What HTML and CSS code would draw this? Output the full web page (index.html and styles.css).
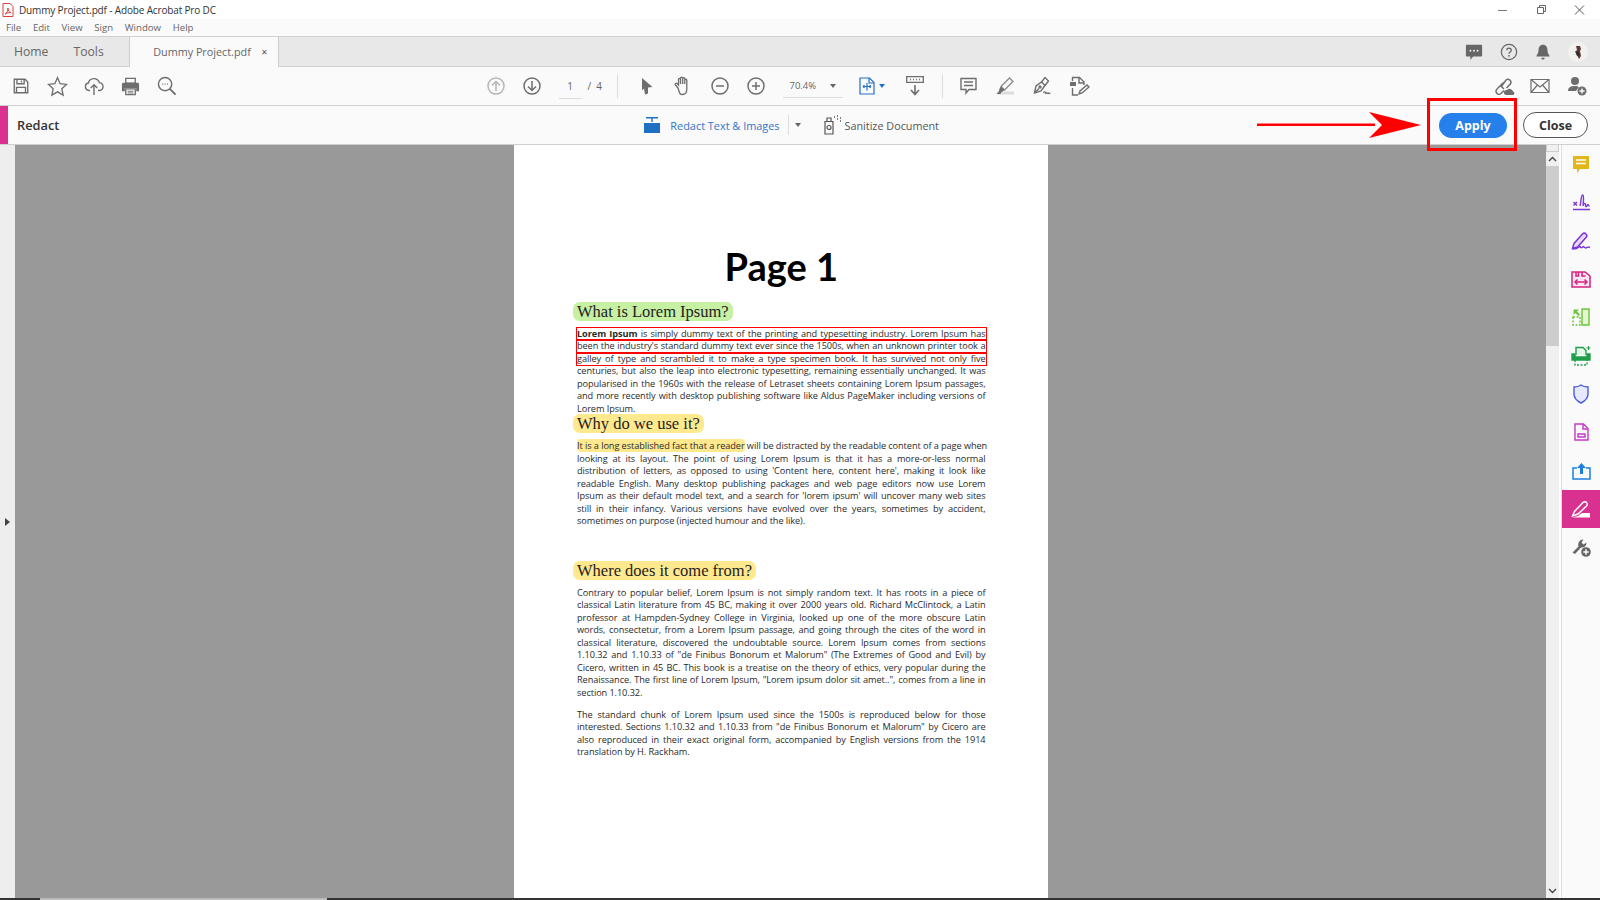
FILE: index.html
```html
<!DOCTYPE html>
<html lang="en">
<head>
    <meta charset="UTF-8">
    <title>Dummy Project.pdf - Adobe Acrobat Pro DC</title>
    <link rel="stylesheet" href="styles.css">
</head>
<body>
<div class="app">

    <div class="titlebar">
        <svg class="pdf-icon" width="12" height="14" viewBox="0 0 12 14"><path d="M1 .5h7l3 3v10H1z" fill="#fff" stroke="#d8413a"/><path d="M3 11c2-1 3-3 3-6 0 3 1 4 3 4.500-2 0-4 .5-6 1.500z" fill="none" stroke="#d8413a"/></svg>
        <span class="title-text">Dummy Project.pdf - Adobe Acrobat Pro DC</span>
        <div class="win-controls">
            <svg width="38" height="16" viewBox="0 0 38 16"><path d="M14 8.500h9" stroke="#777"/></svg>
            <svg width="38" height="16" viewBox="0 0 38 16"><path d="M15.500 5.500h6v6h-6zM17.500 5.500v-2h6v6h-2" fill="none" stroke="#666"/></svg>
            <svg width="38" height="16" viewBox="0 0 38 16"><path d="M15 3.500l9 9M24 3.500l-9 9" stroke="#555"/></svg>
        </div>
    </div>

    <div class="menubar">
        <span>File</span><span>Edit</span><span>View</span><span>Sign</span><span>Window</span><span>Help</span>
    </div>

    <div class="tabbar">
        <span class="nav-tab nav-home">Home</span>
        <span class="nav-tab nav-tools">Tools</span>
        <div class="doc-tab">
            <span>Dummy Project.pdf</span>
            <span class="tab-close">&#10005;</span>
        </div>
        <div class="tab-right">
            <div class="btn"><svg width="18" height="18" viewBox="0 0 20 20"><path d="M2 2h16a1 1 0 0 1 1 1v11a1 1 0 0 1-1 1h-9l-3 4v-4H2a1 1 0 0 1-1-1V3a1 1 0 0 1 1-1z" fill="#666"/><circle cx="6" cy="8.500" r="1" fill="#fff"/><circle cx="10" cy="8.500" r="1" fill="#fff"/><circle cx="14" cy="8.500" r="1" fill="#fff"/></svg></div>
            <div class="btn"><svg width="18" height="18" viewBox="0 0 20 20"><circle cx="10" cy="10" r="8.500" fill="none" stroke="#666" stroke-width="1.400"/><path d="M7.500 8c0-3.200 5-3.200 5 0 0 2-2.500 2-2.500 4" fill="none" stroke="#666" stroke-width="1.400"/><circle cx="10" cy="14.300" r="1" fill="#666"/></svg></div>
            <div class="btn"><svg width="18" height="18" viewBox="0 0 20 20"><path d="M10 2c-3.500 0-5 3-5 6 0 4-2 5-2.500 7h15c-.5-2-2.500-3-2.500-7 0-3-1.500-6-5-6z" fill="#666"/><path d="M8 16.500h4a2 2 0 0 1-4 0z" fill="#666"/></svg></div>
            <div class="btn"><svg width="20" height="20" viewBox="0 0 20 20"><circle cx="10" cy="10" r="10" fill="#f3f1f0"/><path d="M8 4h4l1 3-1 2 1 5-2 3-2-4-1-4 1-1z" fill="#5a3a35"/><path d="M7 9l3 1 2 3-3 1z" fill="#2b2b2b"/></svg></div>
        </div>
    </div>

    <div class="toolbar">
        <div class="tools tools-left">
            <div class="btn"><svg width="18" height="18" viewBox="0 0 20 20" fill="none" stroke="#6e6e6e" stroke-width="1.500"><path d="M2.500 2.500h12l3 3v12h-15z"/><path d="M5.500 2.500v5h8v-5M5 17.500v-6h10v6"/><path d="M10.500 4v2"/></svg></div>
            <div class="btn"><svg width="21" height="21" viewBox="0 0 22 22" fill="none" stroke="#6e6e6e" stroke-width="1.400"><path d="M11 1.800l2.800 6.300 6.700.7-5 4.500 1.400 6.700-5.900-3.400L5.100 20l1.400-6.700-5-4.500 6.700-.7z"/></svg></div>
            <div class="btn"><svg width="20" height="20" viewBox="0 0 20 20" fill="none" stroke="#6e6e6e" stroke-width="1.400"><path d="M6 14.500H5a3.800 3.800 0 0 1-.6-7.500 5.700 5.700 0 0 1 11-.4 4 4 0 0 1 .4 7.900H14"/><path d="M10 19V9M6.700 12L10 8.700l3.300 3.300"/></svg></div>
            <div class="btn"><svg width="19" height="19" viewBox="0 0 20 20"><path d="M5 1.500h10v5H5z" fill="none" stroke="#6e6e6e" stroke-width="1.400"/><path d="M2.500 6h15A1.500 1.500 0 0 1 19 7.500V15h-3v-3.500H4V15H1V7.500A1.500 1.500 0 0 1 2.500 6z" fill="#6e6e6e"/><path d="M5 12.500h10v6H5z" fill="none" stroke="#6e6e6e" stroke-width="1.400"/><path d="M7 15h6M7 16.800h6" stroke="#6e6e6e"/></svg></div>
            <div class="btn"><svg width="20" height="20" viewBox="0 0 21 21" fill="none" stroke="#6e6e6e" stroke-width="1.500"><circle cx="8.500" cy="8.500" r="7"/><path d="M13.500 13.500l6 6" stroke-width="2"/><path d="M5.500 8.500h1M8 8.500h1M10.500 8.500h1"/></svg></div>
        </div>

        <div class="tools tools-mid">
            <div class="btn"><svg width="18" height="18" viewBox="0 0 18 18" fill="none" stroke="#b5b5b5" stroke-width="1.500"><circle cx="9" cy="9" r="8"/><path d="M9 14V4.500M5 8.500l4-4 4 4"/></svg></div>
            <div class="btn"><svg width="18" height="18" viewBox="0 0 18 18" fill="none" stroke="#6e6e6e" stroke-width="1.500"><circle cx="9" cy="9" r="8"/><path d="M9 4v9.500M5 9.500l4 4 4-4"/></svg></div>
            <div class="page-field">1</div>
            <span class="page-total">/&nbsp;&nbsp;4</span>
            <div class="sep sep-a"></div>
            <div class="btn"><svg width="14" height="18" viewBox="0 0 14 18"><path d="M2 1l10.500 9-4.500.5 0 6-3 1-1-6-2 2z" fill="#6e6e6e"/></svg></div>
            <div class="btn"><svg width="20" height="20" viewBox="0 0 20 20" fill="none" stroke="#6e6e6e" stroke-width="1.300"><path d="M5 12L2.500 9c-1-1.300.5-2.500 1.600-1.500L5.500 9V3.500c0-1.500 2-1.500 2 0V8 2.200c0-1.500 2.200-1.500 2.200 0V8 2.800c0-1.500 2.100-1.500 2.100 0V8 4.300c0-1.500 2-1.500 2 0V13c0 3.500-2 5.500-4.500 5.500S6.500 17 5 12z"/></svg></div>
            <div class="btn"><svg width="18" height="18" viewBox="0 0 18 18" fill="none" stroke="#6e6e6e" stroke-width="1.500"><circle cx="9" cy="9" r="8"/><path d="M5 9h8"/></svg></div>
            <div class="btn"><svg width="18" height="18" viewBox="0 0 18 18" fill="none" stroke="#6e6e6e" stroke-width="1.500"><circle cx="9" cy="9" r="8"/><path d="M5 9h8M9 5v8"/></svg></div>
            <div class="zoom-field"><span>70.4%</span><i class="caret"></i></div>
            <div class="btn fit-btn"><svg width="16" height="18" viewBox="0 0 16 18" fill="none" stroke="#1f6fd0" stroke-width="1.200"><path d="M1 1h9.500L15 5.500V17H1z"/><path d="M10 1v5h5" /><path d="M4 9.500h8M8 6v7.500M4 9.500l1.500-1.300M4 9.500l1.500 1.300M12 9.500l-1.500-1.300M12 9.500l-1.500 1.300"/></svg><i class="caret caret-blue"></i></div>
            <div class="btn"><svg width="18" height="20" viewBox="0 0 18 20" fill="none" stroke="#6e6e6e" stroke-width="1.300"><path d="M.7.700h16.600v5.600H.7z"/><path d="M4 3.500h1M7 3.500h1M10 3.500h1M13 3.500h1"/><path d="M9 9v9M5 14l4 4.500 4-4.500" stroke-width="1.600"/></svg></div>
            <div class="sep sep-b"></div>
            <div class="btn"><svg width="17" height="18" viewBox="0 0 17 18" fill="none" stroke="#6e6e6e" stroke-width="1.400"><path d="M1 1.500h15v11H9L6 16v-3.500H1z"/><path d="M4 5h9M4 8.500h9"/></svg></div>
            <div class="btn"><svg width="20" height="20" viewBox="0 0 20 20"><path d="M3 18.500h16v-3H8z" fill="#dcdcdc"/><path d="M6 10.500L14.500 2l3.500 3.500-8.500 8.500z" fill="#fafafa" stroke="#8a8a8a" stroke-width="1.300"/><path d="M6 10.500l3.500 3.500-2 1.500-1 .5-1 2H1.500l2.500-3 .5-2.500z" fill="#6e6e6e"/></svg></div>
            <div class="btn nib-btn"><svg width="20" height="20" viewBox="0 0 20 20" fill="none" stroke="#6e6e6e" stroke-width="1.400"><path d="M1.500 17l1.500-7 5.500-4 3.500 3.500-4 5.500z"/><path d="M1.500 17l4.500-4.500"/><circle cx="7" cy="11" r="1"/><path d="M8.500 6L12 1.500 15.500 5 12 9.500"/><path d="M10.500 17c1-2 1.500-2 2 0s1-1 1.500 0 1-1 1.500 0 1 .5 2 0" stroke-width="1.200"/></svg></div>
            <div class="btn"><svg width="21" height="21" viewBox="0 0 21 21" fill="none" stroke="#6e6e6e" stroke-width="1.400"><path d="M3.500 5V1.500h7l4.500 4.500v3"/><path d="M10 1.500V7h5"/><path d="M3.500 12v7H9"/><path d="M1 6h6v4H1z" fill="#6e6e6e" stroke="none"/><path d="M10 18l1-3 7-6 2 2-7 6z"/></svg></div>
        </div>

        <div class="tools tools-right">
            <div class="btn"><svg width="22" height="20" viewBox="0 0 22 20" fill="none" stroke="#6e6e6e" stroke-width="1.500"><path d="M8 11l5-7a3 3 0 0 1 4.500 3.800L13.500 12"/><path d="M10.500 6.500L4 13a3 3 0 0 0 4 4.500l3-3"/><path d="M8 10l3 3" /><path d="M13 19a2.500 2.500 0 0 1 1-5 3.500 3.500 0 0 1 6 1.500 1.800 1.800 0 0 1 0 3.500z" fill="#6e6e6e" stroke="none"/></svg></div>
            <div class="btn"><svg width="20" height="16" viewBox="0 0 20 16" fill="none" stroke="#6e6e6e" stroke-width="1.200"><path d="M1 1.500h18v13H1z"/><path d="M1 1.500l9 7.500 9-7.500M1 14.500L7.500 7M19 14.500L12.500 7"/></svg></div>
            <div class="btn"><svg width="20" height="20" viewBox="0 0 20 20"><circle cx="8" cy="5" r="4" fill="#6e6e6e"/><path d="M1 15c0-4 3-5 7-5 2 0 3 .5 4 1l-3 4z" fill="#6e6e6e"/><circle cx="15" cy="15" r="4.500" fill="#6e6e6e"/><path d="M12.500 15h5M15 12.500v5" stroke="#fff" stroke-width="1.300"/></svg></div>
        </div>
    </div>

    <div class="redactbar">
        <div class="pink-strip"></div>
        <span class="redact-label">Redact</span>
        <div class="redact-tools">
            <svg class="redact-icon" width="18" height="18" viewBox="0 0 18 18"><path d="M3 1h12v1.500H9.700V6H8.300V2.500H3z" fill="#1f6fc4"/><path d="M1 7h16v10H1z" fill="#1f6fc4"/></svg>
            <span class="redact-link">Redact Text &amp; Images</span>
            <div class="redact-sep"></div>
            <i class="caret"></i>
            <svg class="sanitize-icon" width="20" height="20" viewBox="0 0 20 20" fill="none" stroke="#555" stroke-width="1.200"><path d="M2 6.500h8V19H2zM4 6.500V3h4v3.500"/><circle cx="6" cy="12.500" r="2"/><path d="M11 2h1M14 1h1M14 4h1M17 3h1M17 6h1" stroke-width="1.500"/></svg>
            <span class="sanitize-text">Sanitize Document</span>
        </div>
        <button class="apply-btn">Apply</button>
        <button class="close-btn">Close</button>
        <div class="callout-box"></div>
        <svg class="callout-arrow" width="166" height="28" viewBox="0 0 166 28"><path d="M0 12.500h118V15H0z" fill="#f00"/><path d="M112 1l52 13-52 13 13-13z" fill="#f00"/></svg>
    </div>

    <div class="workspace">
        <div class="left-panel"><i class="panel-arrow"></i></div>

        <div class="doc-area">
            <div class="page">
                <h1>Page 1</h1>

                <h2><span class="hl-green">What is Lorem Ipsum?</span></h2>
                <div class="para">
                    <div class="ln boxed"><b>Lorem Ipsum</b> is simply dummy text of the printing and typesetting industry. Lorem Ipsum has</div>
                    <div class="ln boxed">been the industry's standard dummy text ever since the 1500s, when an unknown printer took a</div>
                    <div class="ln boxed">galley of type and scrambled it to make a type specimen book. It has survived not only five</div>
                    <div class="ln">centuries, but also the leap into electronic typesetting, remaining essentially unchanged. It was</div>
                    <div class="ln">popularised in the 1960s with the release of Letraset sheets containing Lorem Ipsum passages,</div>
                    <div class="ln">and more recently with desktop publishing software like Aldus PageMaker including versions of</div>
                    <div class="ln last">Lorem Ipsum.</div>
                </div>

                <h2 class="h-why"><span class="hl-yellow">Why do we use it?</span></h2>
                <div class="para para-why">
                    <div class="ln"><span class="hl-text">It is a long established fact that a reader</span> will be distracted by the readable content of a page when</div>
                    <div class="ln">looking at its layout. The point of using Lorem Ipsum is that it has a more-or-less normal</div>
                    <div class="ln">distribution of letters, as opposed to using 'Content here, content here', making it look like</div>
                    <div class="ln">readable English. Many desktop publishing packages and web page editors now use Lorem</div>
                    <div class="ln">Ipsum as their default model text, and a search for 'lorem ipsum' will uncover many web sites</div>
                    <div class="ln">still in their infancy. Various versions have evolved over the years, sometimes by accident,</div>
                    <div class="ln last">sometimes on purpose (injected humour and the like).</div>
                </div>

                <h2 class="h-where"><span class="hl-yellow">Where does it come from?</span></h2>
                <div class="para">
                    <div class="ln">Contrary to popular belief, Lorem Ipsum is not simply random text. It has roots in a piece of</div>
                    <div class="ln">classical Latin literature from 45 BC, making it over 2000 years old. Richard McClintock, a Latin</div>
                    <div class="ln">professor at Hampden-Sydney College in Virginia, looked up one of the more obscure Latin</div>
                    <div class="ln">words, consectetur, from a Lorem Ipsum passage, and going through the cites of the word in</div>
                    <div class="ln">classical literature, discovered the undoubtable source. Lorem Ipsum comes from sections</div>
                    <div class="ln">1.10.32 and 1.10.33 of "de Finibus Bonorum et Malorum" (The Extremes of Good and Evil) by</div>
                    <div class="ln">Cicero, written in 45 BC. This book is a treatise on the theory of ethics, very popular during the</div>
                    <div class="ln">Renaissance. The first line of Lorem Ipsum, "Lorem ipsum dolor sit amet..", comes from a line in</div>
                    <div class="ln last">section 1.10.32.</div>
                </div>
                <div class="para para-gap">
                    <div class="ln">The standard chunk of Lorem Ipsum used since the 1500s is reproduced below for those</div>
                    <div class="ln">interested. Sections 1.10.32 and 1.10.33 from "de Finibus Bonorum et Malorum" by Cicero are</div>
                    <div class="ln">also reproduced in their exact original form, accompanied by English versions from the 1914</div>
                    <div class="ln last">translation by H. Rackham.</div>
                </div>
            </div>
        </div>

        <div class="scrollbar">
            <div class="scroll-cap"></div>
            <div class="scroll-btn"><svg width="9" height="6" viewBox="0 0 9 6"><path d="M1 5l3.500-3.500L8 5" fill="none" stroke="#444" stroke-width="1.400"/></svg></div>
            <div class="scroll-thumb"></div>
            <div class="scroll-fill"></div>
            <div class="scroll-btn"><svg width="9" height="6" viewBox="0 0 9 6"><path d="M1 1l3.500 3.500L8 1" fill="none" stroke="#444" stroke-width="1.400"/></svg></div>
        </div>

        <div class="rail">
            <div class="rail-item"><svg width="18" height="19" viewBox="0 0 18 19"><path d="M1 1h16v13H8l-3 4v-4H1z" fill="#e2b71c"/><path d="M4 5h10M4 8.500h10" stroke="#fff" stroke-width="1.500"/></svg></div>
            <div class="rail-item"><svg width="19" height="18" viewBox="0 0 19 18" fill="none" stroke="#7b35d6" stroke-width="1.400"><path d="M1 16.500h17" stroke-width="1.500"/><path d="M1.500 9l3.500 3.500M5 9l-3.500 3.500"/><path d="M8 13c1-3 1-11 2.500-11s1 6 .5 11c.5-3 2.500-3.500 2.500-1s1.500 1.500 2 0 1 1 2 1"/></svg></div>
            <div class="rail-item"><svg width="20" height="20" viewBox="0 0 20 20" fill="none" stroke="#7b35d6" stroke-width="1.500"><path d="M1.500 17.500l1.500-5L11.500 3c1-1 2.500-1 3.500 0s1 2.500 0 3.500L6.500 16z" fill="#e6d9f8"/><path d="M1.500 18c3 0 5-.5 6.500-2s1.500 1.500 3 .5 1-1.500 2-.5 1.500 1.500 3 .5 2-.5 3 0"/></svg></div>
            <div class="rail-item"><svg width="20" height="17" viewBox="0 0 20 17" fill="none" stroke="#d5237f" stroke-width="1.500"><path d="M1 1h13l5 4v11H1z" fill="#fbe6f2"/><path d="M5 1v4h2.500V1M11 1v4h3.500"/><path d="M4 11h12" /><path d="M6.500 8.500L4 11l2.500 2.500M13.500 8.500L16 11l-2.500 2.500"/></svg></div>
            <div class="rail-item"><svg width="18" height="18" viewBox="0 0 18 18" fill="none" stroke="#6cc534" stroke-width="1.400"><path d="M10 1h7v16h-7z" fill="#e4f6d6"/><path d="M1 9h7v8H1z" stroke-dasharray="2 1.500"/><path d="M1.500 1.500h5.500l-2 2 3 3-1.500 1.500-3-3-2 2z" fill="#6cc534" stroke="none"/></svg></div>
            <div class="rail-item"><svg width="20" height="20" viewBox="0 0 20 20" fill="none" stroke="#1f9e4a" stroke-width="1.400"><path d="M5 9V1.500h7l3 3V9" fill="#e4f6e8"/><path d="M1 8h3v3h12V8h3v6H1z" fill="#1f9e4a"/><path d="M4 14v5h12v-5" stroke-dasharray="2 1.500"/><path d="M15.500 2h4M17.500 0v4" stroke-width="1"/></svg></div>
            <div class="rail-item"><svg width="16" height="20" viewBox="0 0 16 20"><path d="M8 1c2 1.500 4 2 7 2v7c0 4-3 7-7 9-4-2-7-5-7-9V3c3 0 5-.5 7-2z" fill="#e6e9ff" stroke="#4a5ce0" stroke-width="1.400"/></svg></div>
            <div class="rail-item"><svg width="15" height="18" viewBox="0 0 15 18" fill="none" stroke="#c637c6" stroke-width="1.400"><path d="M1 1h8.500L14 5.500V17H1z"/><path d="M9 1v5h5"/><path d="M4 11h7v3H4z"/></svg></div>
            <div class="rail-item"><svg width="19" height="18" viewBox="0 0 19 18"><path d="M5 6H1v11h17V6h-4" fill="none" stroke="#1c7fe0" stroke-width="1.500"/><path d="M9.500 1L14 6h-3v6H8V6H5z" fill="#1c7fe0"/></svg></div>
            <div class="rail-item active"><svg width="20" height="18" viewBox="0 0 20 18" fill="none" stroke="#fff" stroke-width="1.500"><path d="M1.500 16l2-4.500L12 2.500c1-1 2.500-1 3.500 0s1 2.500 0 3.500L7 14z"/><path d="M1 17.500h18v-4.500h-8l-4 3z" fill="#fff" stroke="none"/></svg></div>
            <div class="rail-item"><svg width="20" height="20" viewBox="0 0 20 20"><path d="M1.500 15.500l6-6C6.500 6 8.500 2.500 12.500 2.500l-2 3 2 2 3-2c0 3.500-2.500 5.500-5.500 5L4 17z" fill="#666"/><circle cx="15" cy="15" r="4.800" fill="#666"/><path d="M12.300 15h5.400M15 12.300v5.400" stroke="#fff" stroke-width="1.400"/></svg></div>
        </div>
    </div>

    <div class="taskbar">
        <div class="tb-a"></div>
        <div class="tb-b"></div>
        <div class="tb-c"></div>
    </div>
</div>
</body>
</html>
```

FILE: styles.css
```css
body { margin: 0; font-family: "Open Sans", sans-serif; color: #444; }
.app { width: 1600px; height: 900px; display: flex; flex-direction: column; overflow: hidden; background: #fff; }
svg { display: block; flex: none; }
.btn { width: 36.500px; height: 100%; display: flex; align-items: center; justify-content: center; flex: none; }

.titlebar { height: 19px; display: flex; align-items: center; background: #fff; flex: none; }
.pdf-icon { margin-left: 2px; }
.title-text { margin-left: 5px; font-size: 10px; letter-spacing: -.15px; color: #333; }
.win-controls { margin-left: auto; margin-right: 2px; display: flex; }

.menubar { height: 17px; display: flex; align-items: center; background: #fafafa; padding-left: 6px; gap: 11.700px; font-size: 9.600px; color: #666; border-bottom: 1px solid #d0d0d0; flex: none; }

.tabbar { height: 29px; display: flex; align-items: center; background: #e8e8e8; border-bottom: 1px solid #cfcfcf; flex: none; }
.nav-tab { font-size: 12.200px; color: #666; }
.nav-home { margin-left: 14px; }
.nav-tools { margin-left: 25px; }
.doc-tab { margin-left: 25.500px; width: 150px; height: 30px; box-sizing: border-box; background: #fafafa; border-left: 1px solid #cfcfcf; border-right: 1px solid #cfcfcf; display: flex; align-items: center; padding-left: 23px; font-size: 10.800px; color: #666; white-space: nowrap; }
.tab-close { margin-left: 10px; font-size: 8px; color: #555; }
.tab-right { margin-left: auto; display: flex; height: 100%; margin-right: 5px; }
.tab-right .btn { width: 34.500px; }

.toolbar { height: 38px; display: flex; align-items: center; background: #fafafa; border-bottom: 1px solid #cfcfcf; flex: none; }
.tools { display: flex; align-items: center; height: 100%; }
.tools-left { margin-left: 3px; }
.tools-mid { margin-left: 292px; }
.tools-right { margin-left: auto; margin-right: 5px; }
.page-field { width: 23px; margin-left: 8px; height: 24px; line-height: 24px; text-align: center; font-size: 10px; color: #666; border-bottom: 1px solid #ddd; }
.page-total { margin-left: 6px; width: 29px; font-size: 10px; color: #666; }
.sep { width: 1px; height: 24px; background: #ddd; flex: none; }
.sep-a { margin-right: 11px; }
.sep-b { margin: 0 7px 0 9px; }
.nib-btn { margin-left: 2px; }
.zoom-field { width: 60px; margin-left: 8px; height: 24px; box-sizing: border-box; border-bottom: 1px solid #ddd; display: flex; align-items: center; padding-left: 7px; font-size: 9.500px; color: #666; }
.zoom-field span { width: 40px; }
.caret { display: block; width: 0; height: 0; border: 3px solid transparent; border-top: 4px solid #666; border-bottom: 0; flex: none; }
.caret-blue { border-top-color: #1f6fd0; margin-left: 4px; }
.fit-btn { width: 47px; margin-left: 6px; margin-right: 1px; }

.redactbar { height: 38px; display: flex; align-items: center; background: #fafafa; border-bottom: 1px solid #cfcfcf; position: relative; flex: none; }
.pink-strip { width: 8px; height: 100%; background: #d9318f; }
.redact-label { margin-left: 9px; font-size: 12.800px; font-weight: 600; color: #333; }
.redact-tools { display: flex; align-items: center; margin-left: 584px; height: 100%; }
.redact-link { margin-left: 9px; font-size: 10.900px; color: #3273c9; }
.redact-sep { width: 1px; height: 20px; background: #ddd; margin: 0 6px 0 8px; }
.sanitize-icon { margin-left: 22px; }
.sanitize-text { margin-left: 2px; font-size: 10.800px; color: #555; }
.apply-btn { margin-left: auto; width: 68px; height: 25px; border: 0; border-radius: 13px; background: #2680eb; color: #fff; font: 700 12.500px "Open Sans", sans-serif; padding: 0; }
.close-btn { margin-left: 16px; margin-right: 12px; width: 65px; height: 26px; box-sizing: border-box; border: 1px solid #555; border-radius: 13px; background: #fff; color: #333; font: 700 12.500px "Open Sans", sans-serif; padding: 0; }
.callout-box { position: absolute; left: 1427px; top: -8px; width: 90px; height: 53px; box-sizing: border-box; border: 3px solid #f00; }
.callout-arrow { position: absolute; left: 1257px; top: 5px; }

.workspace { flex: 1; display: flex; min-height: 0; }
.left-panel { width: 15px; background: #eeeeee; display: flex; align-items: center; justify-content: center; flex: none; }
.panel-arrow { display: block; width: 0; height: 0; border: 4px solid transparent; border-left: 5px solid #444; border-right: 0; }
.doc-area { flex: 1; background: #999; display: flex; justify-content: center; overflow: hidden; }
.page { width: 534px; background: #fff; box-sizing: border-box; padding: 98px 62px 0 63.500px; color: #2a2a2a; }
h1 { margin: 0 0 13px; text-align: center; font: 700 38px/46px Lato, sans-serif; color: #000; }
h2 { margin: 0; height: 19px; font: 400 16.500px/19px "Liberation Serif", serif; color: #222; }
h2 span { display: inline-block; padding: 0 4px; margin-left: -4px; border-radius: 7px; }
.hl-green { background: #c6f0a2; }
.hl-yellow { background: #ffe98f; }
.h-why { margin-top: -1.200px; }
.h-where { margin-top: 33.200px; }
.para { margin: 6.500px 0 0; font-size: 9.200px; letter-spacing: -.08px; line-height: 12.500px; }
.para-why { margin-top: 7.500px; }
.para-gap { margin-top: 9.500px; }
.ln { height: 12.500px; text-align: justify; text-align-last: justify; white-space: nowrap; }
.ln.last { text-align-last: left; }
.boxed { outline: 1px solid #f00; }
.hl-text { background: #ffe98f; border-radius: 4px; }

.scrollbar { width: 13px; margin-right: 2px; background: #f0f0f0; display: flex; flex-direction: column; flex: none; }
.scroll-cap { height: 7px; background: #f0f0f0; border: 1px solid #ccc; border-top: 0; box-sizing: border-box; }
.scroll-btn { height: 14px; display: flex; align-items: center; justify-content: center; flex: none; }
.scroll-thumb { height: 180px; background: #cdcdcd; }
.scroll-fill { flex: 1; }

.rail { width: 38px; background: #fafafa; border-left: 1px solid #ddd; flex: none; }
.rail-item { height: 38.300px; display: flex; align-items: center; justify-content: center; }
.rail-item.active { background: #d9318f; }

.taskbar { height: 2px; display: flex; flex: none; }
.tb-a { width: 40px; background: #333; }
.tb-b { width: 287px; background: #bbb; }
.tb-c { flex: 1; background: #333; }
```
